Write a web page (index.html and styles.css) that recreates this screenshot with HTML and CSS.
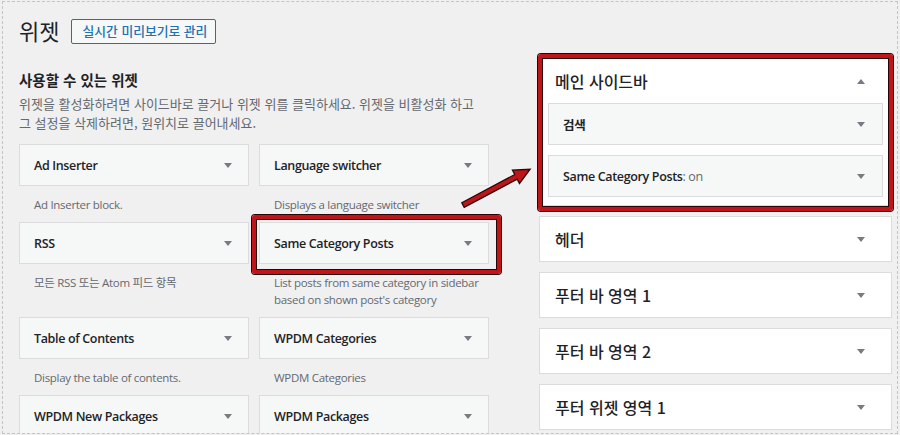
FILE: index.html
```html
<!DOCTYPE html>
<html lang="ko">
<head>
<meta charset="utf-8">
<title>위젯</title>
<link rel="stylesheet" href="styles.css">
</head>
<body>
<div class="frame">
  <div class="page-head">
    <h1 class="title">위젯</h1>
    <a class="btn-outline">실시간 미리보기로 관리</a>
  </div>
  <div class="main">
    <div class="available">
      <h2 class="section-title">사용할 수 있는 위젯</h2>
      <p class="section-desc">위젯을 활성화하려면 사이드바로 끌거나 위젯 위를 클릭하세요. 위젯을 비활성화 하고<br>그 설정을 삭제하려면, 원위치로 끌어내세요.</p>
      <div class="widget-grid">
        <div class="widget"><div class="widget-top"><span class="wt">Ad Inserter</span><i class="tri"></i></div><div class="wdesc">Ad Inserter block.</div></div>
        <div class="widget"><div class="widget-top"><span class="wt">Language switcher</span><i class="tri"></i></div><div class="wdesc">Displays a language switcher</div></div>
        <div class="widget"><div class="widget-top"><span class="wt">RSS</span><i class="tri"></i></div><div class="wdesc">모든 RSS 또는 Atom 피드 항목</div></div>
        <div class="widget"><div class="widget-top"><span class="wt">Same Category Posts</span><i class="tri"></i></div><div class="wdesc">List posts from same category in sidebar<br>based on shown post's category</div></div>
        <div class="widget"><div class="widget-top"><span class="wt">Table of Contents</span><i class="tri"></i></div><div class="wdesc">Display the table of contents.</div></div>
        <div class="widget"><div class="widget-top"><span class="wt">WPDM Categories</span><i class="tri"></i></div><div class="wdesc">WPDM Categories</div></div>
        <div class="widget"><div class="widget-top"><span class="wt">WPDM New Packages</span><i class="tri"></i></div><div class="wdesc">&nbsp;</div></div>
        <div class="widget"><div class="widget-top"><span class="wt">WPDM Packages</span><i class="tri"></i></div><div class="wdesc">&nbsp;</div></div>
      </div>
    </div>
    <div class="sidebars">
      <div class="sidebar open">
        <div class="sb-head"><span class="sb-title">메인 사이드바</span><i class="tri up"></i></div>
        <div class="sb-body">
          <div class="inner-widget"><span class="wt">검색</span><i class="tri"></i></div>
          <div class="inner-widget"><span class="wt">Same Category Posts<span class="in-title">: on</span></span><i class="tri"></i></div>
        </div>
      </div>
      <div class="sidebar"><div class="sb-head"><span class="sb-title">헤더</span><i class="tri"></i></div></div>
      <div class="sidebar"><div class="sb-head"><span class="sb-title">푸터 바 영역 1</span><i class="tri"></i></div></div>
      <div class="sidebar"><div class="sb-head"><span class="sb-title">푸터 바 영역 2</span><i class="tri"></i></div></div>
      <div class="sidebar"><div class="sb-head"><span class="sb-title">푸터 위젯 영역 1</span><i class="tri"></i></div></div>
    </div>
  </div>
  <div class="mark mark-sidebar"></div>
  <div class="mark mark-widget"></div>
  <svg class="arrow" width="900" height="435" viewBox="0 0 900 435">
    <g transform="translate(463 205) rotate(-28)">
      <polygon points="0,-2.6 60,-2.6 60,-7.5 76,0 60,7.5 60,2.6 0,2.6" fill="#c0141b" stroke="#2a0505" stroke-width="1.3" stroke-linejoin="miter"/>
    </g>
  </svg>
</div>
</body>
</html>
```

FILE: styles.css
```css
html, body {
  margin: 0;
  padding: 0;
  background: #f0f0f1;
  overflow: hidden;
}
body {
  font-family: "Open Sans", "Noto Sans CJK KR", sans-serif;
  color: #1d2327;
}
.frame {
  position: relative;
  margin: 1px 0 0 2px;
  width: 896px;
  height: 433px;
  box-sizing: border-box;
  border: 1px dashed #c3c4c7;
  padding: 0 0 0 16px;
  overflow: hidden;
}
.page-head {
  display: flex;
  align-items: center;
  gap: 10px;
  height: 40px;
  margin-top: 10px;
}
.title {
  margin: -4px 0 0;
  font-family: "Noto Sans CJK KR", sans-serif;
  font-size: 22px;
  font-weight: 400;
  line-height: 28px;
}
.btn-outline {
  display: inline-flex;
  align-items: center;
  height: 25px;
  box-sizing: border-box;
  margin: -2px 0 0 2px;
  padding: 0 8px 0 10px;
  border: 1px solid #2271b1;
  border-radius: 2px;
  background: #f6f7f7;
  color: #2271b1;
  font-family: "Noto Sans CJK KR", sans-serif;
  font-size: 12.8px;
  font-weight: 500;
  line-height: 1;
}
.main {
  display: flex;
  gap: 50px;
  margin-top: 5px;
}
.available {
  width: 470px;
  flex: none;
}
.section-title {
  margin: 12px 0 0;
  font-family: "Noto Sans CJK KR", sans-serif;
  font-size: 14.5px;
  font-weight: 600;
  line-height: 22px;
}
.section-desc {
  margin: 3px 0 0;
  font-family: "Noto Sans CJK KR", sans-serif;
  font-size: 13px;
  line-height: 19px;
  color: #646970;
  white-space: nowrap;
}
.widget-grid {
  display: grid;
  grid-template-columns: 230px 230px;
  column-gap: 10px;
  margin-top: 12px;
}
.widget-top {
  display: flex;
  align-items: center;
  justify-content: space-between;
  height: 42px;
  box-sizing: border-box;
  padding: 0 16px 0 14px;
  background: #f6f7f7;
  border: 1px solid #dcdcde;
}
.wt {
  font-size: 12.5px;
  font-weight: 600;
  letter-spacing: -0.35px;
  white-space: nowrap;
}
.wdesc {
  padding: 10px 15px 9px;
  font-size: 11.5px;
  line-height: 17px;
  letter-spacing: -0.3px;
  color: #646970;
  white-space: nowrap;
}
.tri {
  display: block;
  width: 0;
  height: 0;
  border-left: 4px solid transparent;
  border-right: 4px solid transparent;
  border-top: 5px solid #787c82;
}
.tri.up {
  border-top: 0;
  border-bottom: 5px solid #787c82;
}
.sidebars {
  width: 353px;
  flex: none;
  display: flex;
  flex-direction: column;
  gap: 10px;
  margin-top: -2px;
}
.sidebar {
  background: #fff;
  border: 1px solid #dcdcde;
}
.sb-head {
  display: flex;
  align-items: center;
  justify-content: space-between;
  height: 44px;
  padding: 0 26px 0 15px;
}
.sidebar.open .sb-head {
  height: 47px;
  padding-top: 3px;
  box-sizing: border-box;
}
.sb-title {
  font-family: "Noto Sans CJK KR", sans-serif;
  font-size: 16px;
  font-weight: 500;
}
.sb-body {
  display: flex;
  flex-direction: column;
  gap: 10px;
  padding: 0 8px 8px;
}
.inner-widget {
  display: flex;
  align-items: center;
  justify-content: space-between;
  height: 42px;
  box-sizing: border-box;
  padding: 0 17px 0 14px;
  background: #f6f7f7;
  border: 1px solid #dcdcde;
}
.in-title {
  font-weight: 400;
  color: #646970;
}
.mark {
  position: absolute;
  box-sizing: border-box;
  border: 4px solid #c0141b;
  border-radius: 3px;
  box-shadow: 0 0 0 1px #2a0505, inset 0 0 0 1px #2a0505;
  pointer-events: none;
}
.mark-sidebar {
  left: 535px;
  top: 52px;
  width: 355px;
  height: 157px;
}
.mark-widget {
  left: 249px;
  top: 213px;
  width: 249px;
  height: 59px;
}
.arrow {
  position: absolute;
  left: -3px;
  top: -2px;
  pointer-events: none;
}
```
